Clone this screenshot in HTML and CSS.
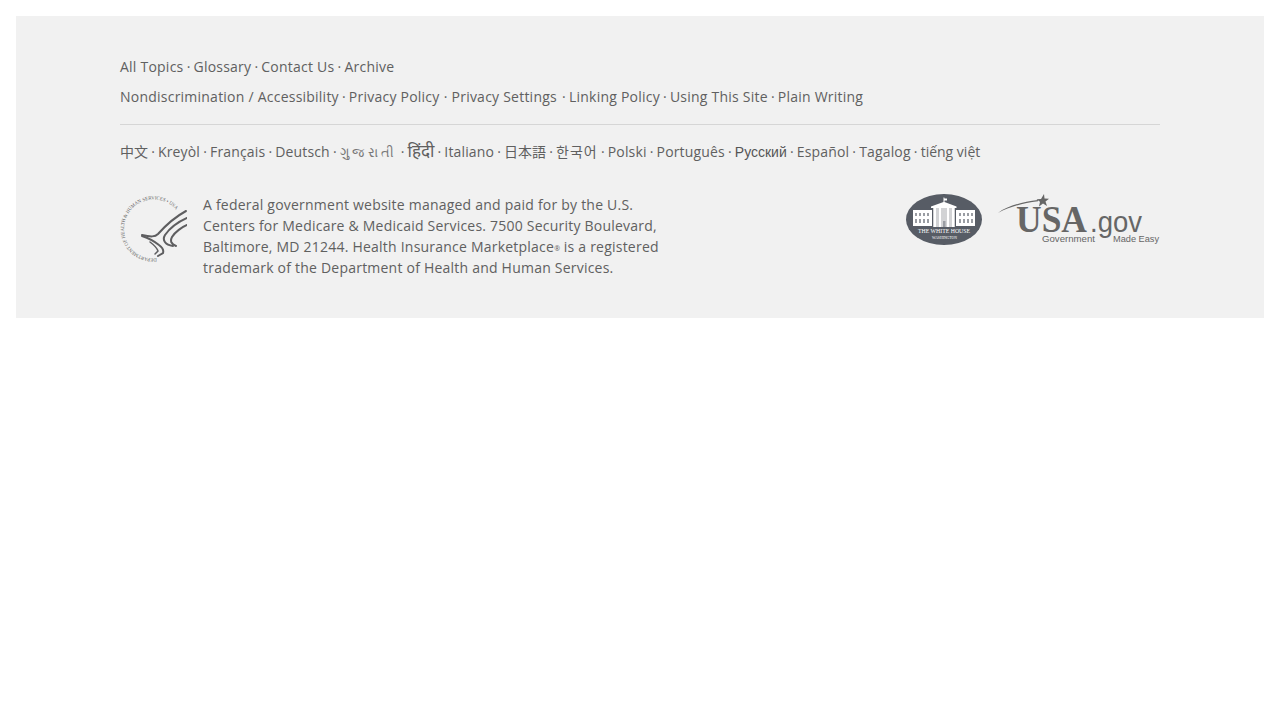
FILE: index.html
```html
<!DOCTYPE html>
<html lang="en">
<head>
<meta charset="utf-8">
<title>Footer</title>
<link rel="stylesheet" href="styles.css">
</head>
<body>
<footer class="footer">
  <ul class="links">
    <li><a href="#">All Topics</a></li>
    <li><a href="#">Glossary</a></li>
    <li><a href="#">Contact Us</a></li>
    <li><a href="#">Archive</a></li>
  </ul>
  <ul class="links links-second">
    <li><a href="#">Nondiscrimination / Accessibility</a></li>
    <li><a href="#">Privacy Policy</a></li>
    <li class="wide"><a href="#">Privacy Settings</a></li>
    <li><a href="#">Linking Policy</a></li>
    <li><a href="#">Using This Site</a></li>
    <li><a href="#">Plain Writing</a></li>
  </ul>
  <ul class="links langs">
    <li><a href="#" class="plain" lang="zh">中文</a></li>
    <li><a href="#">Kreyòl</a></li>
    <li><a href="#">Français</a></li>
    <li><a href="#">Deutsch</a></li>
    <li><a href="#" class="gu" lang="gu">ગુજરાતી</a></li>
    <li><a href="#" class="hi" lang="hi">हिंदी</a></li>
    <li><a href="#">Italiano</a></li>
    <li><a href="#" class="plain" lang="ja">日本語</a></li>
    <li><a href="#" class="ko" lang="ko">한국어</a></li>
    <li><a href="#">Polski</a></li>
    <li><a href="#">Português</a></li>
    <li><a href="#" class="ru">Русский</a></li>
    <li><a href="#">Español</a></li>
    <li><a href="#">Tagalog</a></li>
    <li><a href="#" class="vi">tiếng việt</a></li>
  </ul>
  <div class="bottom">
    <svg class="seal" width="67" height="68" viewBox="0 0 67 68">
      <defs>
        <path id="ring" d="M36.600 63.300A29.500 29.500 0 1 1 57.100 16.300"/>
      </defs>
      <text class="seal-text"><textPath href="#ring" textLength="121" lengthAdjust="spacingAndGlyphs">DEPARTMENT OF HEALTH &amp; HUMAN SERVICES • USA</textPath></text>
      <g fill="none" stroke="#5e5e60" stroke-linecap="round">
        <path stroke-width="2" d="M66 16C55 22 46 30 38 39c-3 3-7 3-16 1"/>
        <path stroke-width="2" d="M67 23C58 27 50 33 45 40c-3 5 0 10 8 11"/>
        <path stroke-width="2" d="M67 30c-5 2-12 7-15 12-2 4-1 7 4 9"/>
        <path stroke-width="2" d="M22 41c6 2 12 5 17 9 4 3 5 5 4 8l-5 3"/>
        <path stroke-width="1.500" d="M30 47c4 3 7 6 8 9l-3 3"/>
      </g>
    </svg>
    <p class="about">A federal government website managed and paid for by the U.S. Centers for Medicare &amp; Medicaid Services. 7500 Security Boulevard, Baltimore, MD 21244. Health Insurance Marketplace<sup>®</sup> is a registered trademark of the Department of Health and Human Services.</p>
    <div class="logos">
      <svg class="wh" width="76" height="52" viewBox="0 0 76 52">
        <ellipse cx="38" cy="25.500" rx="38" ry="25.500" fill="#575c65"/>
        <path fill="#fff" d="M37.500 3.500h.8l.2 1h2.500v2h-2.500v1.500l12 4.500v1.500H25v-1.500l12.500-4.500z"/>
        <path fill="#fff" d="M7 16h19v16H7zM50 16h19v16H50z"/>
        <path fill="#d2d3d5" d="M27 14h22v19H27z"/>
        <path fill="#fff" d="M28 14h2v19h-2zM33 14h2v19h-2zM41 14h2v19h-2zM46 14h2v19h-2z"/>
        <g fill="#9a9da3">
          <path d="M9 19h2v3H9zM13 19h2v3h-2zM17 19h2v3h-2zM21 19h2v3h-2zM53 19h2v3h-2zM57 19h2v3h-2zM61 19h2v3h-2zM65 19h2v3h-2z"/>
          <path d="M9 25h2v4H9zM13 25h2v4h-2zM17 25h2v4h-2zM21 25h2v4h-2zM53 25h2v4h-2zM57 25h2v4h-2zM61 25h2v4h-2zM65 25h2v4h-2z"/>
          <path d="M37 27h2.500v6H37z"/>
        </g>
        <text class="wh-name" x="12" y="39" textLength="52" lengthAdjust="spacingAndGlyphs">THE WHITE HOUSE</text>
        <text class="wh-place" x="26" y="45" textLength="25" lengthAdjust="spacingAndGlyphs">WASHINGTON</text>
      </svg>
      <svg class="usa" width="163" height="52" viewBox="0 0 163 52">
        <path fill="#666" d="M1 19C10 12 25 8 41 6v1.200C26 9 12 13 1 19z"/>
        <path fill="#666" d="M47 0l.5 4.500 4.500.3-3.500 2.700 1.500 4.500-4-2.500-4 3 1-4.700-3.500-2.500 4.500-.2z"/>
        <text class="usa-name" x="19" y="38" textLength="71" lengthAdjust="spacingAndGlyphs">USA</text>
        <text class="usa-gov" x="93" y="38" textLength="52" lengthAdjust="spacingAndGlyphs">.gov</text>
        <text class="usa-tag" x="45" y="48" textLength="53" lengthAdjust="spacingAndGlyphs">Government</text>
        <text class="usa-tag" x="116" y="48" textLength="46" lengthAdjust="spacingAndGlyphs">Made Easy</text>
      </svg>
    </div>
  </div>
</footer>
</body>
</html>
```
FILE: styles.css
```css
body {
  margin: 0;
  padding: 16px;
  background: #fff;
  font-family: "Open Sans", "Noto Sans CJK SC", "Noto Sans", sans-serif;
  font-size: 14px;
  line-height: 21px;
  letter-spacing: .22px;
  color: #606060;
}

.footer {
  background: #f1f1f1;
  padding: 40px 104px;
  height: 302px;
  box-sizing: border-box;
}

.links {
  display: flex;
  flex-wrap: wrap;
  align-items: baseline;
  list-style: none;
  margin: 0;
  padding: 0;
  letter-spacing: .23px;
}

.links li {
  height: 21px;
}

.links li + li::before {
  content: "·";
  display: inline-block;
  width: 10px;
  text-align: center;
  letter-spacing: 0;
}

.links a {
  color: #606060;
  text-decoration: none;
}

.links .wide::before {
  width: 12px;
}

.links .wide a {
  margin-right: 2px;
}

.links-second {
  margin-top: 9px;
  padding-bottom: 17px;
  border-bottom: 1px solid #d6d6d6;
}

.langs {
  margin-top: 15px;
  letter-spacing: .15px;
}

.langs .plain {
  letter-spacing: 0;
}

.langs .ko {
  letter-spacing: 1px;
}

.langs .ru {
  font-family: "Liberation Sans", sans-serif;
  letter-spacing: 0;
  color: #555;
}

.langs .vi {
  letter-spacing: 0;
}

.langs .gu {
  font-size: 13px;
  letter-spacing: 3.400px;
  color: #777;
}

.langs .hi {
  font-size: 17px;
  letter-spacing: 0;
}

.bottom {
  display: flex;
  margin-top: 32px;
}

.seal {
  flex: none;
  margin-top: 1px;
}

.seal-text {
  font-family: "Liberation Serif", serif;
  font-size: 5px;
  letter-spacing: 0;
  fill: #5e5e60;
}

.about {
  width: 470px;
  margin: 0 0 0 16px;
}

.about sup {
  font-size: 7px;
  line-height: 0;
  letter-spacing: 0;
  vertical-align: baseline;
  position: relative;
  top: -1px;
}

.logos {
  display: flex;
  gap: 15px;
  margin-left: auto;
}

.logos text {
  letter-spacing: 0;
}

.wh-name,
.wh-place {
  font-family: "Liberation Serif", serif;
  fill: #fff;
}

.wh-name {
  font-size: 6.500px;
}

.wh-place {
  font-size: 3.500px;
}

.usa-name {
  font-family: "Liberation Serif", serif;
  font-size: 37px;
  font-weight: bold;
  fill: #666;
}

.usa-gov {
  font-family: "Liberation Sans", sans-serif;
  font-size: 29px;
  fill: #666;
}

.usa-tag {
  font-family: "Liberation Sans", sans-serif;
  font-size: 9.500px;
  fill: #666;
}
```
